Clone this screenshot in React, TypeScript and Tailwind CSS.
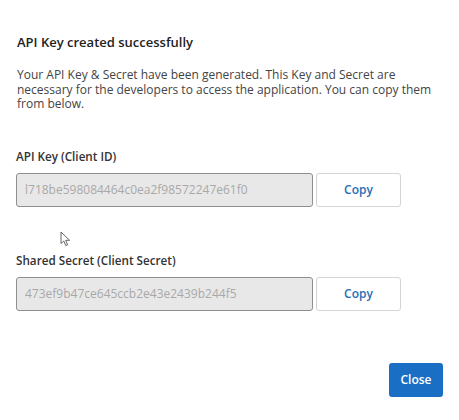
import React from "react";

function Pointer() {
  return (
    <svg className="absolute left-[60px] top-[231px]" width="12" height="16" viewBox="0 0 12 16">
      <path d="M1 1 L1 12.5 L3.8 10 L5.8 14.6 L7.6 13.8 L5.7 9.3 L9.6 9.3 Z" fill="#fff" stroke="#555" strokeWidth="0.9" strokeLinejoin="round" />
    </svg>
  );
}

function KeyField({ label, value }: { label: string; value: string }) {
  return (
    <div>
      <p className="text-[11.7px] font-semibold text-[#333] leading-[16px]">{label}</p>
      <div className="flex gap-[3px] mt-[9px]">
        <div className="w-[297px] h-[34px] bg-[#e8e8e8] border border-[#8f8f8f] rounded-[3px] flex items-center pl-[8px] text-[12px] text-[#a8a8a8]">
          {value}
        </div>
        <button className="w-[85px] h-[34px] bg-white border border-[#d4d4d4] rounded-[3px] text-[12px] font-semibold text-[#2a6db5]">
          Copy
        </button>
      </div>
    </div>
  );
}

export default function App() {
  return (
    <div className="relative w-[459px] h-[420px] bg-white font-['Open_Sans',sans-serif] pl-[17px] pr-[16px] pt-[33px]">
      <h2 className="text-[13px] font-semibold text-[#222] leading-[18px]">API Key created successfully</h2>
      <p className="mt-[17px] text-[12px] text-[#444] leading-[14.5px] w-[420px]">
        Your API Key &amp; Secret have been generated. This Key and Secret are necessary for the developers to access the application. You can copy them from below.
      </p>
      <div className="mt-[36px] -ml-[1px]">
        <KeyField label="API Key (Client ID)" value="l718be598084464c0ea2f98572247e61f0" />
      </div>
      <div className="mt-[45px] -ml-[1px]">
        <KeyField label="Shared Secret (Client Secret)" value="473ef9b47ce645ccb2e43e2439b244f5" />
      </div>
      <div className="flex justify-end mt-[52px]">
        <button className="w-[54px] h-[34px] bg-[#1a6fc4] rounded-[3px] text-white text-[12px] font-semibold">
          Close
        </button>
      </div>
      <Pointer />
    </div>
  );
}
